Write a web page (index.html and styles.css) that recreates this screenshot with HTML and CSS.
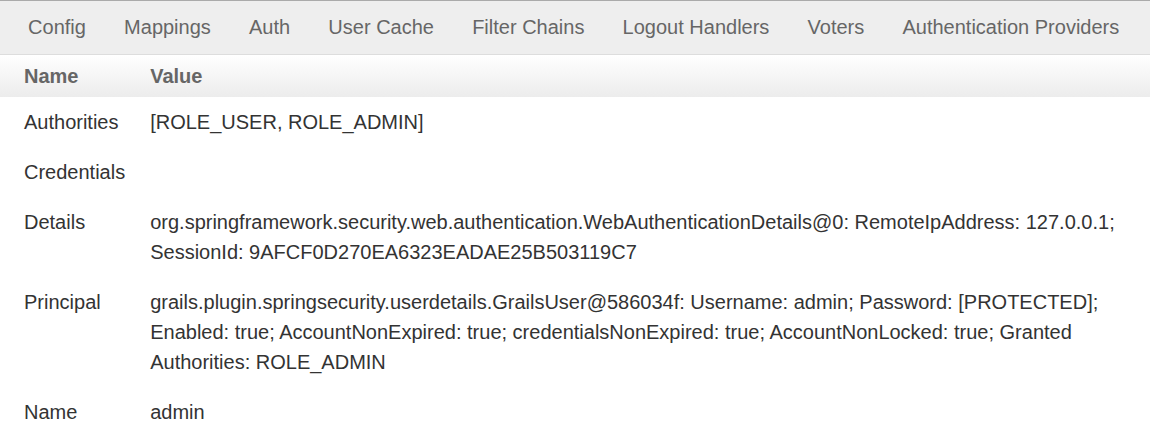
FILE: index.html
```html
<!DOCTYPE html>
<html>
<head>
<meta charset="utf-8">
<link rel="stylesheet" href="styles.css">
</head>
<body>
<div class="page">
  <nav class="tabs">
    <a class="tab">Config</a>
    <a class="tab">Mappings</a>
    <a class="tab">Auth</a>
    <a class="tab">User Cache</a>
    <a class="tab">Filter Chains</a>
    <a class="tab">Logout Handlers</a>
    <a class="tab">Voters</a>
    <a class="tab">Authentication Providers</a>
  </nav>
  <table class="props">
    <thead>
      <tr><th class="name">Name</th><th class="value">Value</th></tr>
    </thead>
    <tbody>
      <tr><td class="name">Authorities</td><td class="value">[ROLE_USER, ROLE_ADMIN]</td></tr>
      <tr><td class="name">Credentials</td><td class="value"></td></tr>
      <tr><td class="name">Details</td><td class="value">org.springframework.security.web.authentication.WebAuthenticationDetails@0: RemoteIpAddress: 127.0.0.1; SessionId: 9AFCF0D270EA6323EADAE25B503119C7</td></tr>
      <tr><td class="name">Principal</td><td class="value">grails.plugin.springsecurity.userdetails.GrailsUser@586034f: Username: admin; Password: [PROTECTED]; Enabled: true; AccountNonExpired: true; credentialsNonExpired: true; AccountNonLocked: true; Granted Authorities: ROLE_ADMIN</td></tr>
      <tr><td class="name">Name</td><td class="value">admin</td></tr>
    </tbody>
  </table>
</div>
</body>
</html>
```
FILE: styles.css
```css
html, body {
  margin: 0;
  padding: 0;
  background: #fff;
}
body {
  font-family: "Liberation Sans", Arial, sans-serif;
  font-size: 20px;
  color: #333;
}
.page {
  border-top: 1px solid #aaa;
}
.tabs {
  display: flex;
  background: #eee;
  border-bottom: 1px solid #ddd;
  height: 53px;
  padding-left: 9px;
}
.tab {
  display: block;
  line-height: 53px;
  padding: 0 19.1px;
  color: #666;
  text-decoration: none;
}
.props {
  width: 100%;
  border-collapse: collapse;
  border-spacing: 0;
}
.props th {
  text-align: left;
  font-weight: bold;
  color: #666;
  line-height: 30px;
  padding: 6px 12px;
  background: linear-gradient(to bottom, #ffffff 0%, #ececec 100%);
}
.props td {
  line-height: 30px;
  padding: 10px 12px;
  vertical-align: top;
}
.props .name {
  padding-left: 24px;
  padding-right: 13px;
  white-space: nowrap;
  width: 1px;
}
.props td.value {
  padding-right: 12px;
}
```
